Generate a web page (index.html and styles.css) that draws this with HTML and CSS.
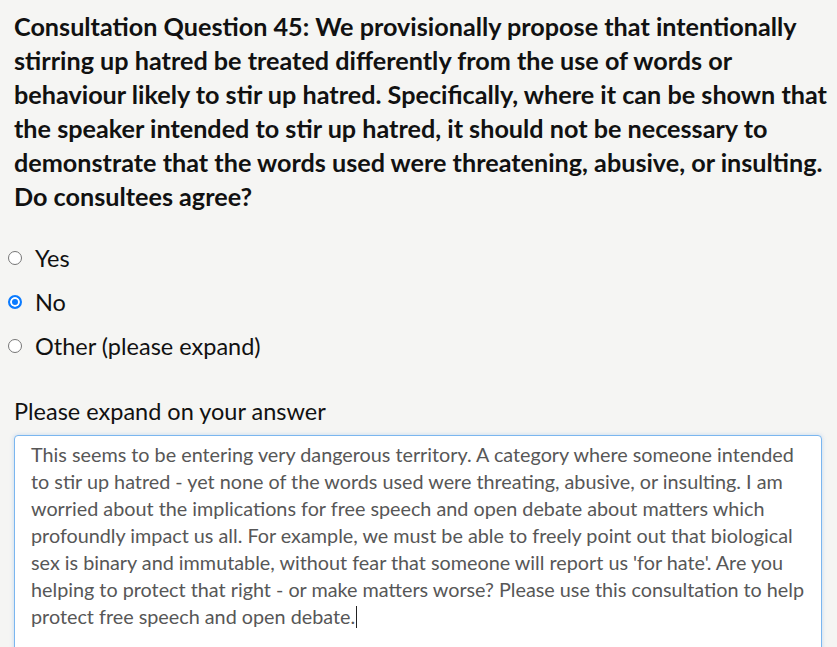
FILE: index.html
```html
<!DOCTYPE html>
<html lang="en">
<head>
<meta charset="utf-8">
<link rel="stylesheet" href="styles.css">
</head>
<body>
<main class="question">
  <h2 class="question-title">Consultation Question 45: We provisionally propose that intentionally stirring up hatred be treated differently from the use of words or behaviour likely to stir up hatred. Specifically, where it can be shown that the speaker intended to stir up hatred, it should not be necessary to demonstrate that the words used were threatening, abusive, or insulting. Do consultees agree?</h2>
  <div class="options">
    <label class="option"><span class="radio"></span><span class="option-text">Yes</span></label>
    <label class="option"><span class="radio checked"></span><span class="option-text">No</span></label>
    <label class="option"><span class="radio"></span><span class="option-text">Other (please expand)</span></label>
  </div>
  <div class="expand">
    <div class="expand-label">Please expand on your answer</div>
    <div class="answer">This seems to be entering very dangerous territory. A category where someone intended to stir up hatred - yet none of the words used were threating, abusive, or insulting. I am worried about the implications for free speech and open debate about matters which profoundly impact us all. For example, we must be able to freely point out that biological sex is binary and immutable, without fear that someone will report us 'for hate'. Are you helping to protect that right - or make matters worse? Please use this consultation to help protect free speech and open debate.<span class="caret"></span></div>
  </div>
</main>
</body>
</html>
```
FILE: styles.css
```css
html, body {
  margin: 0;
  padding: 0;
  background: #f5f5f3;
  overflow: hidden;
}
body {
  font-family: Lato, "Open Sans", sans-serif;
  color: #111;
}
.question {
  padding: 9px 6px 0 14px;
}
.question-title {
  margin: 0;
  font-size: 25.2px;
  font-weight: 700;
  line-height: 34px;
  color: #111;
}
.options {
  margin-top: 23px;
  display: flex;
  flex-direction: column;
}
.option {
  display: flex;
  align-items: center;
  height: 44px;
  margin-left: -6px;
}
.radio {
  width: 14px;
  height: 14px;
  box-sizing: border-box;
  border: 1px solid #767676;
  border-radius: 50%;
  background: #fff;
  margin-right: 13px;
  flex: none;
}
.radio.checked {
  border: 2px solid #0b7bff;
  box-shadow: inset 0 0 0 2px #fff;
  background: #0b7bff;
}
.option-text {
  font-size: 23.5px;
  color: #111;
}
.expand {
  margin-top: 28px;
}
.expand-label {
  font-size: 23.5px;
  line-height: 30px;
  color: #111;
  margin-bottom: 9px;
}
.answer {
  width: 808px;
  height: 240px;
  box-sizing: border-box;
  background: #fff;
  border: 1px solid #7ab6ef;
  border-radius: 4px;
  box-shadow: 0 0 4px rgba(100, 160, 230, 0.35);
  padding: 5px 16px;
  font-size: 19.8px;
  line-height: 27px;
  color: #575757;
}
.caret {
  display: inline-block;
  width: 1px;
  height: 22px;
  background: #222;
  vertical-align: -4px;
  margin-left: 1px;
}
```
